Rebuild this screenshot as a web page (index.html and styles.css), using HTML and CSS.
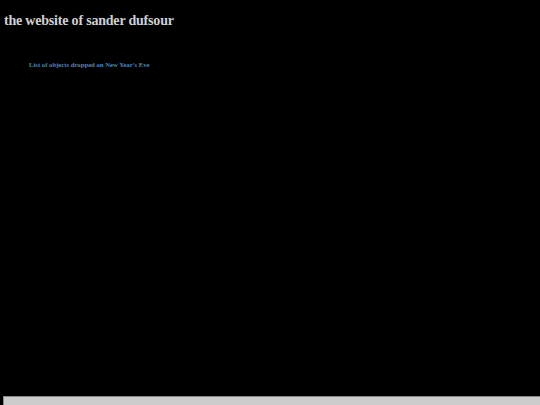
FILE: index.html
```html
<!DOCTYPE html>
<html>
<head>
<meta charset="utf-8">
<link rel="stylesheet" href="styles.css">
</head>
<body>
<h1 class="title">the website of sander dufsour</h1>
<ul class="links">
<li><a class="link" href="#">List of objects dropped on New Year's Eve</a></li>
</ul>
<div class="bar"></div>
</body>
</html>
```
FILE: styles.css
```css
html, body {
  margin: 0;
  padding: 0;
  background: #000;
  height: 100%;
  overflow: hidden;
}
body {
  font-family: "Liberation Serif", "Times New Roman", serif;
  display: flex;
  flex-direction: column;
}
.title {
  margin: 0;
  padding: 12px 0 0 4px;
  font-size: 14px;
  letter-spacing: -0.2px;
  font-weight: bold;
  color: #d0d0d0;
  line-height: 18px;
}
.links {
  list-style: none;
  margin: 0;
  padding: 23px 0 0 29px;
}
.link {
  font-size: 6.7px;
  font-weight: bold;
  color: #4a88bb;
  text-decoration: none;
  line-height: 9px;
}
.bar {
  margin-top: auto;
  margin-left: 3px;
  height: 8px;
  background: #cccccc;
  border-top: 1px solid #888;
  border-left: 1px solid #888;
}
```
